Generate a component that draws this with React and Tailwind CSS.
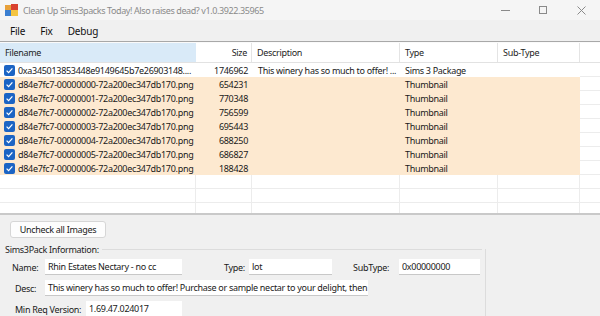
import React from 'react';

const rows = [
  { name: '0xa345013853448e9149645b7e26903148....', size: '1746962', desc: 'This winery has so much to offer! ...', type: 'Sims 3 Package', pkg: true },
  { name: 'd84e7fc7-00000000-72a200ec347db170.png', size: '654231', type: 'Thumbnail' },
  { name: 'd84e7fc7-00000001-72a200ec347db170.png', size: '770348', type: 'Thumbnail' },
  { name: 'd84e7fc7-00000002-72a200ec347db170.png', size: '756599', type: 'Thumbnail' },
  { name: 'd84e7fc7-00000003-72a200ec347db170.png', size: '695443', type: 'Thumbnail' },
  { name: 'd84e7fc7-00000004-72a200ec347db170.png', size: '688250', type: 'Thumbnail' },
  { name: 'd84e7fc7-00000005-72a200ec347db170.png', size: '686827', type: 'Thumbnail' },
  { name: 'd84e7fc7-00000006-72a200ec347db170.png', size: '188428', type: 'Thumbnail' },
];

const cols = 'grid grid-cols-[196px_56px_148px_98px_82px_20px]';

const Check = () => (
  <svg width="11" height="11" viewBox="0 0 11 11" className="shrink-0">
    <rect x="0" y="0" width="11" height="11" rx="2" fill="#1c64c4" />
    <path d="M2.6 5.6 L4.6 7.6 L8.4 3.4" fill="none" stroke="#fff" strokeWidth="1.3" />
  </svg>
);

const AppIcon = () => (
  <svg width="13" height="12" viewBox="0 0 13 12">
    <rect x="0" y="1" width="6" height="5" fill="#e8a13a" />
    <rect x="6" y="0" width="7" height="6" fill="#d9412e" />
    <rect x="0" y="6" width="6" height="6" fill="#3b7fd1" />
    <rect x="6" y="6" width="7" height="6" fill="#f4c542" />
  </svg>
);

const Field = ({ className, children }) => (
  <div className={`h-[16px] bg-white border-b border-[#c8c8c8] flex items-center px-[3px] overflow-hidden text-[#1a1a1a] ${className}`}>
    {children}
  </div>
);

export default function App() {
  return (
    <div className="w-[600px] h-[316px] overflow-hidden bg-[#f0f0f0] font-['Noto_Sans',sans-serif] text-[9px] tracking-[-0.3px] text-[#1a1a1a] leading-none whitespace-nowrap">
      {/* title bar */}
      <div className="h-[20px] bg-[#f5f5f5] flex items-center">
        <div className="pl-[5px] pr-[5px]"><AppIcon /></div>
        <span className="text-[#8a8a8a] text-[9px] tracking-[-0.4px]">Clean Up Sims3packs Today! Also raises dead? v1.0.3922.35965</span>
        <div className="ml-auto flex items-center h-full">
          <div className="w-[38px] flex justify-center"><div className="w-[9px] h-px bg-[#8a8a8a]" /></div>
          <div className="w-[38px] flex justify-center"><div className="w-[8px] h-[8px] border border-[#8a8a8a]" /></div>
          <div className="w-[38px] flex justify-center">
            <svg width="9" height="9" viewBox="0 0 9 9"><path d="M0.5 0.5 L8.5 8.5 M8.5 0.5 L0.5 8.5" stroke="#8a8a8a" strokeWidth="1" /></svg>
          </div>
        </div>
      </div>
      {/* menu */}
      <div className="h-[21px] bg-[#f0f0f0] flex items-center gap-[15px] pl-[10px] text-[10px] tracking-[-0.2px] text-[#111]">
        <span>File</span>
        <span>Fix</span>
        <span>Debug</span>
      </div>
      <div className="h-[2px] border-t border-[#a8a8a8] bg-[#fafafa]" />
      {/* grid */}
      <div className="h-[172px] bg-white border-b-2 border-[#c9c9c9] overflow-hidden">
        <div className={`${cols} h-[20px] border-b border-[#e2e2e2] text-[#1e1e1e]`}>
          <div className="bg-[#d9eaf8] flex items-center pl-[5px]">Filename</div>
          <div className="flex items-center justify-end pr-[4px] border-r border-[#e4e4e4]">Size</div>
          <div className="flex items-center pl-[5px] border-r border-[#e4e4e4]">Description</div>
          <div className="flex items-center pl-[5px] border-r border-[#e4e4e4]">Type</div>
          <div className="flex items-center pl-[5px] border-r border-[#e4e4e4]">Sub-Type</div>
          <div />
        </div>
        {rows.map((r, i) => (
          <div key={i} className={`${cols} h-[14px]`}>
            <div className={`flex items-center gap-[3px] pl-[4px] overflow-hidden ${r.pkg ? 'bg-white' : 'bg-[#fde9d0]'}`}>
              <Check />
              <span>{r.name}</span>
            </div>
            <div className={`flex items-center justify-end pr-[4px] ${r.pkg ? 'bg-white' : 'bg-[#fde9d0]'}`}>{r.size}</div>
            <div className={`flex items-center pl-[6px] overflow-hidden ${r.pkg ? 'bg-white' : 'bg-[#fde9d0]'}`}>{r.desc}</div>
            <div className={`flex items-center pl-[5px] ${r.pkg ? 'bg-white' : 'bg-[#fde9d0]'}`}>{r.type}</div>
            <div className={r.pkg ? 'bg-white' : 'bg-[#fde9d0]'} />
            <div className="border-b border-[#ececec]" />
          </div>
        ))}
        {[0, 1, 2].map((i) => (
          <div key={i} className={`${cols} h-[14px] border-b border-[#ececec]`}>
            <div className="border-r border-[#ececec]" />
            <div className="border-r border-[#ececec]" />
            <div className="border-r border-[#ececec]" />
            <div className="border-r border-[#ececec]" />
            <div className="border-r border-[#ececec]" />
            <div />
          </div>
        ))}
      </div>
      {/* bottom panel */}
      <div className="pl-[10px] pt-[6px]">
        <button className="w-[96px] h-[17px] bg-[#fdfdfd] border border-[#d6d6d6] rounded-[3px] text-[9px] text-[#1a1a1a]">Uncheck all Images</button>
      </div>
      <div className="ml-[5px] mt-[5px] w-[481px]">
        <div className="flex items-center gap-[3px] h-[12px]">
          <span className="text-[#222]">Sims3Pack Information:</span>
          <div className="flex-1 h-px bg-[#dcdcdc] mt-[1px]" />
          <div className="w-px h-[70px] bg-[#dcdcdc] self-start mt-[6px]" />
        </div>
        <div className="flex items-center mt-[3px] h-[18px]">
          <span className="ml-[7px] w-[33px]">Name:</span>
          <Field className="w-[137px]">Rhin Estates Nectary - no cc</Field>
          <span className="ml-[42px] w-[25px]">Type:</span>
          <Field className="w-[83px]">lot</Field>
          <span className="ml-[21px] w-[46px]">SubType:</span>
          <Field className="w-[81px]">0x00000000</Field>
        </div>
        <div className="flex items-center mt-[3px] h-[18px]">
          <span className="ml-[10px] w-[30px]">Desc:</span>
          <Field className="w-[323px]">This winery has so much to offer! Purchase or sample nectar to your delight, then tr</Field>
        </div>
        <div className="flex items-center mt-[3px] h-[18px]">
          <span className="ml-[10px] w-[71px]">Min Req Version:</span>
          <Field className="w-[96px]">1.69.47.024017</Field>
        </div>
      </div>
    </div>
  );
}
